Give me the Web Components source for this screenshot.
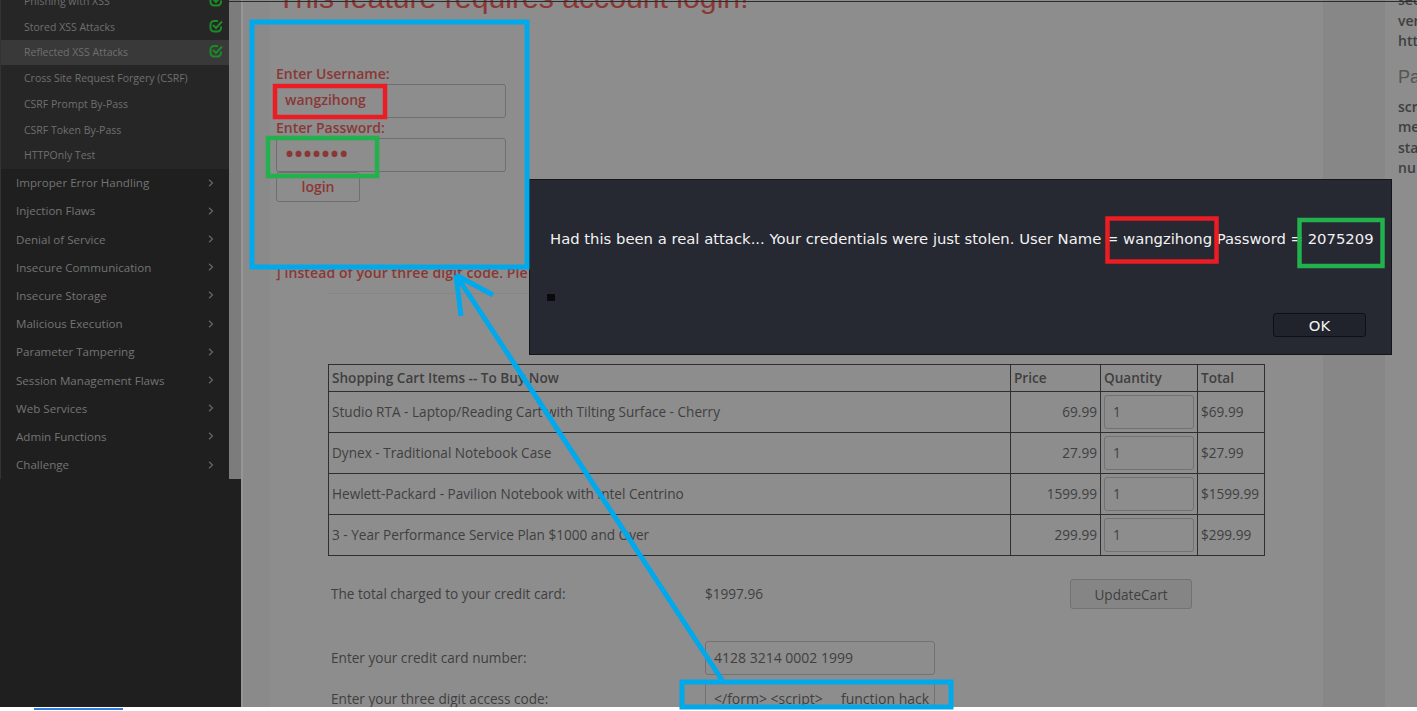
<!DOCTYPE html>
<html>
<head>
<meta charset="utf-8">
<title>Reflected XSS Attacks</title>
<style>
  html, body { margin: 0; height: 711px; overflow: hidden; background: #fff; font-family: "Open Sans", "Noto Sans", sans-serif; }
</style>
</head>
<body>
<lesson-page></lesson-page>
<script>
class SideMenu extends HTMLElement {
  constructor() {
    super();
    this.attachShadow({ mode: 'open' });
    this.subItems = [
      { label: 'Phishing with XSS', done: true },
      { label: 'Stored XSS Attacks', done: true },
      { label: 'Reflected XSS Attacks', done: true, active: true },
      { label: 'Cross Site Request Forgery (CSRF)' },
      { label: 'CSRF Prompt By-Pass' },
      { label: 'CSRF Token By-Pass' },
      { label: 'HTTPOnly Test' }
    ];
    this.groups = ['Improper Error Handling', 'Injection Flaws', 'Denial of Service', 'Insecure Communication',
      'Insecure Storage', 'Malicious Execution', 'Parameter Tampering', 'Session Management Flaws',
      'Web Services', 'Admin Functions', 'Challenge'];
  }

  connectedCallback() {
    const check = `<svg class="check" width="14" height="14" viewBox="0 0 14 14" fill="none" stroke="#1b8a27" stroke-width="2">
      <path d="M12 7.500V9a3.500 3.500 0 0 1-3.500 3.500H5A3.500 3.500 0 0 1 1.500 9V5.500A3.500 3.500 0 0 1 5 2h4"/>
      <path d="M4 6l3 3 6-6.500"/></svg>`;
    this.shadowRoot.innerHTML = `
      <style>
        :host { display: flex; width: 241px; height: 100%; flex: none; background: #1f1f1f; font-size: 10.5px; color: #6f6f6f; }
        .col { width: 229px; height: 479px; display: flex; flex-direction: column; overflow: hidden; flex: none; border-left: 1px solid #333; box-sizing: border-box; }
        .rail { width: 12px; height: 479px; background: #7c7c7c; flex: none; }
        .subs { flex: none; background: #262626; margin-top: -12px; padding-bottom: .4px; }
        .sub { height: 25.75px; display: flex; align-items: center; justify-content: space-between; padding: 0 6px 0 23px; box-sizing: border-box; }
        .sub.active { background: #393939; }
        .check { margin-top: -2px; }
        .group { flex: none; height: 28.2px; display: flex; align-items: center; justify-content: space-between; padding: 0 15px 0 15px; box-sizing: border-box; font-size: 11.6px; color: #747474; }
        .chev { color: #686868; }
      </style>
      <div class="col">
        <div class="subs">
          ${this.subItems.map(item => `<div class="sub ${item.active ? 'active' : ''}"><span>${item.label}</span>${item.done ? check : ''}</div>`).join('')}
        </div>
        ${this.groups.map(g => `<div class="group"><span>${g}</span><svg class="chev" width="6" height="8" viewBox="0 0 6 8" fill="none" stroke="currentColor" stroke-width="1.2"><path d="M1 .8 4.500 4 1 7.200"/></svg></div>`).join('')}
      </div>
      <div class="rail"></div>
    `;
  }
}

class LoginForm extends HTMLElement {
  constructor() {
    super();
    this.attachShadow({ mode: 'open' });
  }

  connectedCallback() {
    this.shadowRoot.innerHTML = `
      <style>
        :host { display: block; color: #8a3735; font-weight: 600; font-size: 14px; }
        .label { height: 20px; line-height: 20px; }
        .box { width: 230px; height: 34px; box-sizing: border-box; border: 1px solid #6f6f6f; border-radius: 3px; padding: 0 8px 4px; display: flex; align-items: center; }
        .dots { font-size: 24px; line-height: 1; }
        .btn { width: 84px; height: 30px; box-sizing: border-box; border: 1px solid #6f6f6f; border-radius: 3px; padding-bottom: 2px; display: flex; align-items: center; justify-content: center; }
      </style>
      <div class="label">Enter Username:</div>
      <div class="box">wangzihong</div>
      <div class="label">Enter Password:</div>
      <div class="box dots">•••••••</div>
      <div class="btn">login</div>
    `;
  }
}

class CartTable extends HTMLElement {
  constructor() {
    super();
    this.attachShadow({ mode: 'open' });
    this.rows = [
      ['Studio RTA - Laptop/Reading Cart with Tilting Surface - Cherry', '69.99', '$69.99'],
      ['Dynex - Traditional Notebook Case', '27.99', '$27.99'],
      ['Hewlett-Packard - Pavilion Notebook with Intel Centrino', '1599.99', '$1599.99'],
      ['3 - Year Performance Service Plan $1000 and Over', '299.99', '$299.99']
    ];
  }

  connectedCallback() {
    this.shadowRoot.innerHTML = `
      <style>
        :host { display: block; font-size: 13.6px; color: #3f3f3f; }
        table { border-collapse: collapse; width: 936px; table-layout: fixed; }
        th, td { border: 1px solid #2f2f2f; padding: 0 3px 1px; text-align: left; overflow: hidden; white-space: nowrap; }
        th { height: 25px; font-weight: 600; }
        td { height: 39px; }
        td.num { text-align: right; }
        .qty { width: 90px; height: 34px; box-sizing: border-box; border: 1px solid #727272; border-radius: 3px; padding: 0 8px 1px; display: flex; align-items: center; }
      </style>
      <table>
        <colgroup><col style="width:682px"><col style="width:90px"><col style="width:97px"><col style="width:67px"></colgroup>
        <tr><th>Shopping Cart Items -- To Buy Now</th><th>Price</th><th>Quantity</th><th>Total</th></tr>
        ${this.rows.map(r => `<tr><td>${r[0]}</td><td class="num">${r[1]}</td><td><div class="qty">1</div></td><td>${r[2]}</td></tr>`).join('')}
      </table>
    `;
  }
}

class PayForm extends HTMLElement {
  constructor() {
    super();
    this.attachShadow({ mode: 'open' });
  }

  connectedCallback() {
    this.shadowRoot.innerHTML = `
      <style>
        :host { display: block; font-size: 13.6px; color: #3f3f3f; }
        .row { display: grid; grid-template-columns: 374px 365px auto; align-items: center; }
        .row > span { padding-bottom: 2px; }
        .total { height: 30px; margin-bottom: 32px; }
        .field { height: 34px; margin-bottom: 7px; }
        .box { width: 230px; height: 34px; box-sizing: border-box; border: 1px solid #727272; border-radius: 3px; padding: 0 8px 2px; display: flex; align-items: center; overflow: hidden; white-space: pre; font-size: 14px; }
        .btn { width: 122px; height: 30px; box-sizing: border-box; border: 1px solid #727272; border-radius: 3px; background: #858585; display: flex; align-items: center; justify-content: center; }
      </style>
      <div class="row total"><span>The total charged to your credit card:</span><span>$1997.96</span><div class="btn">UpdateCart</div></div>
      <div class="row field"><span>Enter your credit card number:</span><div class="box">4128 3214 0002 1999</div></div>
      <div class="row field"><span>Enter your three digit access code:</span><div class="box">&lt;/form&gt; &lt;script&gt;     function hack</div></div>
    `;
  }
}

class AlertDialog extends HTMLElement {
  constructor() {
    super();
    this.attachShadow({ mode: 'open' });
  }

  connectedCallback() {
    this.shadowRoot.innerHTML = `
      <style>
        :host { position: absolute; left: 529px; top: 179px; width: 863px; height: 176px; box-sizing: border-box; background: #262832; border: 1px solid #14151a; color: #f2f2f2; font-family: "DejaVu Sans", sans-serif; font-size: 14.8px; display: flex; flex-direction: column; padding: 50px 25px 17px 20px; }
        .msg { white-space: pre; line-height: 18px; }
        .mark { width: 8px; height: 7px; background: #0a0a0c; margin: 46px 0 0 -3px; }
        .foot { display: flex; justify-content: flex-end; margin-top: auto; }
        .ok { width: 93px; height: 24px; box-sizing: border-box; background: #21232c; border: 1px solid #0f1014; border-radius: 3px; display: flex; align-items: center; justify-content: center; }
      </style>
      <div class="msg">Had this been a real attack... Your credentials were just stolen. User Name = wangzihong Password = 2075209</div>
      <div class="mark"></div>
      <div class="foot"><div class="ok">OK</div></div>
    `;
  }
}

class MarkupLayer extends HTMLElement {
  constructor() {
    super();
    this.attachShadow({ mode: 'open' });
  }

  connectedCallback() {
    this.shadowRoot.innerHTML = `
      <style>
        :host { position: absolute; left: 0; top: 0; width: 1417px; height: 711px; pointer-events: none; }
        svg { display: block; }
      </style>
      <svg width="1417" height="711" fill="none">
        <path d="M229 1.500H1417" stroke="#2c2c2c"/>
        <g stroke="#00a8ec" stroke-width="5">
          <rect x="252" y="22" width="275" height="245"/>
          <rect x="682" y="682" width="269" height="25"/>
          <path d="M722 680 456 275M456 275 493 295M456 275 461 316"/>
        </g>
        <g stroke="#ec1c24" stroke-width="4.500">
          <rect x="275" y="86" width="110" height="31"/>
          <rect x="1107.500" y="218.500" width="109" height="43"/>
        </g>
        <g stroke="#22b14c" stroke-width="4.500">
          <rect x="268" y="138" width="109" height="38"/>
          <rect x="1299.500" y="220" width="83" height="46"/>
        </g>
      </svg>
    `;
  }
}

class LessonPage extends HTMLElement {
  constructor() {
    super();
    this.attachShadow({ mode: 'open' });
  }

  connectedCallback() {
    this.shadowRoot.innerHTML = `
      <style>
        :host { display: block; position: relative; width: 1417px; height: 711px; overflow: hidden; }
        .top { display: flex; height: 707px; }
        .main { flex: 1; display: flex; background: #8a8a8a; overflow: hidden; border-left: 2px solid #969696; }
        .content { margin-left: 27px; width: 1053px; background: #8d8d8d; flex: none; box-sizing: border-box; padding-left: 7px; overflow: hidden; }
        h1 { margin: -18px 0 0 0; font: 400 30.2px/32px "Liberation Sans", sans-serif; color: #8a3735; white-space: nowrap; }
        login-form { margin: 50px 0 0 -1px; }
        .err { margin: 61px 0 0 -1px; font-size: 14px; line-height: 20px; font-weight: 600; letter-spacing: .1px; color: #8a3735; white-space: nowrap; }
        .rule { height: 1px; background: #868686; margin: 10px 0 0 51px; width: 930px; }
        cart-table { margin: 70px 0 0 51px; }
        pay-form { margin: 23px 0 0 54px; }
        .gutter { width: 62px; flex: none; background: #878787; }
        .notes { flex: 1; background: #8d8d8d; padding: 0 0 0 13px; overflow: hidden; font-size: 14px; font-weight: 600; line-height: 20.500px; color: #3f3f3f; }
        .notes .block { margin-top: -10px; }
        .notes h3 { margin: 13px 0 8px; font: 400 18px/24px "Liberation Sans", sans-serif; color: #555; }
        .strip { height: 4px; background: #fff; position: relative; }
        .strip i { display: block; position: absolute; left: 34px; top: 1px; width: 89px; height: 2px; background: #2d7fe0; }
      </style>
      <div class="top">
        <side-menu></side-menu>
        <div class="main">
          <div class="content">
            <h1>This feature requires account login!</h1>
            <login-form></login-form>
            <div class="err">] instead of your three digit code. Ple</div>
            <div class="rule"></div>
            <cart-table></cart-table>
            <pay-form></pay-form>
          </div>
          <div class="gutter"></div>
          <div class="notes">
            <div class="block">sec<br>ver<br>htt</div>
            <h3>Pa</h3>
            <div>scr<br>me<br>sta<br>nu</div>
          </div>
        </div>
      </div>
      <div class="strip"><i></i></div>
      <alert-dialog></alert-dialog>
      <markup-layer></markup-layer>
    `;
  }
}

customElements.define('side-menu', SideMenu);
customElements.define('login-form', LoginForm);
customElements.define('cart-table', CartTable);
customElements.define('pay-form', PayForm);
customElements.define('alert-dialog', AlertDialog);
customElements.define('markup-layer', MarkupLayer);
customElements.define('lesson-page', LessonPage);
</script>
</body>
</html>
